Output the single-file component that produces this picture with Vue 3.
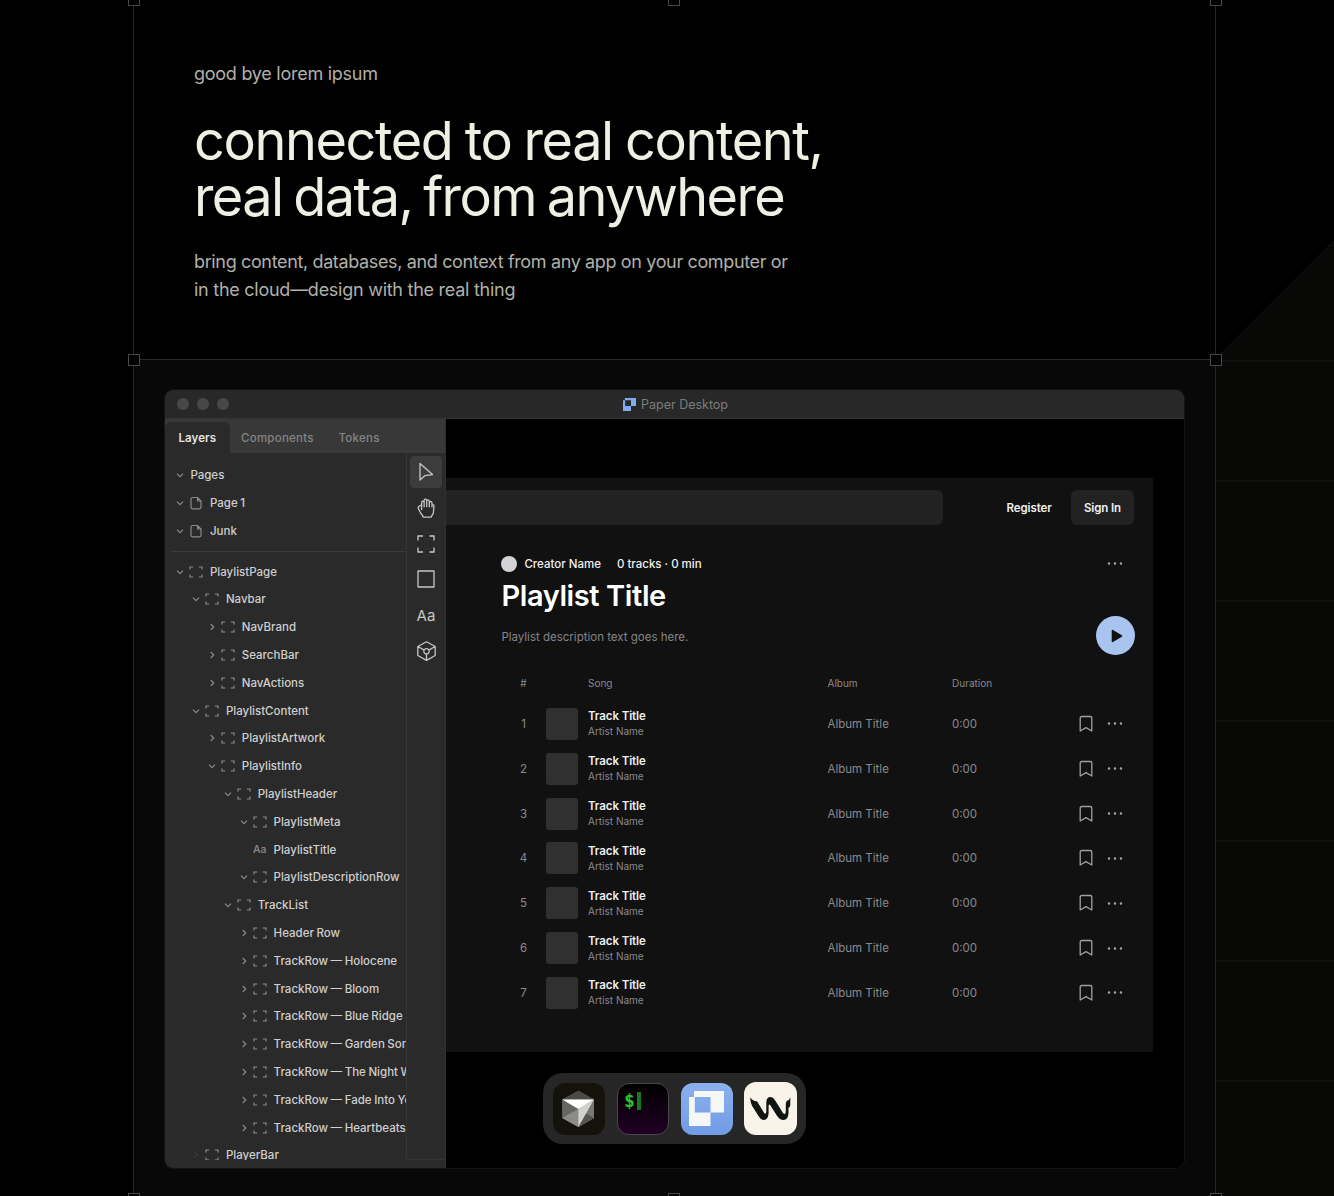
<template>
    <div class="page">
        <svg class="backdrop" width="119" height="1196" viewBox="0 0 119 1196">
            <path d="M0 360 119 241V1196H0Z" fill="#080807" />
            <path d="M0 360 119 241" stroke="#131313" fill="none" />
            <path
                v-for="y in guideLines"
                :key="y"
                :d="`M0 ${y}H119`"
                stroke="#131312"
                stroke-width="1.5"
            />
        </svg>

        <main class="frame">
            <section class="intro">
                <p class="eyebrow">good bye lorem ipsum</p>
                <h1>
                    <span>connected to real content,</span>
                    <span class="tight">real data, from anywhere</span>
                </h1>
                <p class="lead">
                    <span>bring content, databases, and context from any app on your computer or</span>
                    <span class="loose">in the cloud—design with the real thing</span>
                </p>
            </section>

            <section class="stage">
                <div class="window">
                    <header class="titlebar">
                        <div class="lights"><i></i><i></i><i></i></div>
                        <div class="window-title">
                            <svg width="13" height="13" viewBox="8 8 35 35">
                                <path :d="paperMark" fill="#82aaf0" fill-rule="evenodd" />
                            </svg>
                            <span>Paper Desktop</span>
                        </div>
                    </header>

                    <div class="window-body">
                        <aside class="sidebar">
                            <nav class="tabs">
                                <span class="tab active">Layers</span>
                                <span class="tab components">Components</span>
                                <span class="tab">Tokens</span>
                            </nav>
                            <div class="panels">
                                <div class="tree">
                                    <template v-for="(row, i) in layers" :key="i">
                                        <div v-if="i === 3" class="divider"></div>
                                        <div
                                            class="layer"
                                            :style="{ paddingLeft: `${10.4 + row.depth * 15.9}px` }"
                                        >
                                            <svg
                                                class="chevron"
                                                :class="{ dim: row.dim }"
                                                width="10"
                                                height="10"
                                                viewBox="0 0 10 10"
                                            >
                                                <path
                                                    v-if="row.state"
                                                    :d="
                                                        row.state === 'open'
                                                            ? 'M2 3.6 5 6.6 8 3.6'
                                                            : 'M3.7 2 6.7 5 3.7 8'
                                                    "
                                                />
                                            </svg>
                                            <span v-if="row.icon === 'text'" class="type-icon">Aa</span>
                                            <svg
                                                v-else-if="row.icon"
                                                class="layer-icon"
                                                width="14"
                                                height="14"
                                                viewBox="0 0 14 14"
                                            >
                                                <path
                                                    v-if="row.icon === 'page'"
                                                    d="M3.5 1.5H8.6L12 5V11.3Q12 12.8 10.5 12.8H3.5Q2 12.8 2 11.3V3Q2 1.5 3.5 1.5ZM8.6 1.5V5H12"
                                                />
                                                <path
                                                    v-else
                                                    d="M1 4.6V2H4.2M9.8 2H13V4.6M13 9.4V12H9.8M4.2 12H1V9.4"
                                                />
                                            </svg>
                                            <span class="layer-name">{{ row.name }}</span>
                                        </div>
                                    </template>
                                </div>

                                <div class="tools">
                                    <div
                                        v-for="tool in tools"
                                        :key="tool.name"
                                        class="tool"
                                        :class="{ selected: tool.name === 'move' }"
                                    >
                                        <span v-if="tool.name === 'text'">Aa</span>
                                        <svg v-else width="24" height="24" viewBox="0 0 24 24">
                                            <path :d="tool.d" />
                                        </svg>
                                    </div>
                                </div>
                            </div>
                        </aside>

                        <div class="canvas">
                            <article class="app">
                                <div class="navbar">
                                    <div class="search"></div>
                                    <span class="register">Register</span>
                                    <span class="signin">Sign In</span>
                                </div>

                                <div class="playlist">
                                    <div class="info">
                                        <div class="meta">
                                            <i class="avatar"></i>
                                            <span>Creator Name</span>
                                            <span class="count">0 tracks · 0 min</span>
                                        </div>
                                        <h2>Playlist Title</h2>
                                        <p>Playlist description text goes here.</p>
                                    </div>
                                    <div class="actions">
                                        <svg class="dots" width="16" height="17" viewBox="0 0 16 17">
                                            <path :d="dots" />
                                        </svg>
                                        <div class="play">
                                            <svg width="12" height="14" viewBox="0 0 12 14">
                                                <path
                                                    d="M1.5 1.6 10.4 7 1.5 12.4Z"
                                                    fill="#111"
                                                    stroke="#111"
                                                    stroke-width="1.6"
                                                    stroke-linejoin="round"
                                                />
                                            </svg>
                                        </div>
                                    </div>
                                </div>

                                <div class="track head">
                                    <span class="num">#</span>
                                    <span></span>
                                    <span>Song</span>
                                    <span>Album</span>
                                    <span>Duration</span>
                                </div>
                                <div v-for="n in 7" :key="n" class="track">
                                    <span class="num">{{ n }}</span>
                                    <i class="cover"></i>
                                    <div class="song">
                                        <strong>Track Title</strong>
                                        <small>Artist Name</small>
                                    </div>
                                    <span>Album Title</span>
                                    <span class="time">0:00</span>
                                    <svg width="14" height="18" viewBox="0 0 14 18">
                                        <path
                                            d="M1.2 3Q1.2 1.5 2.7 1.5H11.3Q12.8 1.5 12.8 3V16L7 12.6 1.2 16Z"
                                            fill="none"
                                            stroke="#a09fa4"
                                            stroke-width="1.3"
                                            stroke-linejoin="round"
                                        />
                                    </svg>
                                    <svg class="dots" width="16" height="17" viewBox="0 0 16 17">
                                        <path :d="dots" />
                                    </svg>
                                </div>
                            </article>
                        </div>
                    </div>

                    <div class="dock">
                        <div class="dock-icon cursor">
                            <svg width="51" height="51" viewBox="0 0 51 51">
                                <path d="M25.3 7.7 41 16.6V35L25.3 44 9.3 35V16.6Z" fill="#70706e" />
                                <path d="M25.3 7.7 41 16.6H9.3Z" fill="#4b4a47" />
                                <path d="M9.3 16.6 25.3 26 9.3 35Z" fill="#666664" />
                                <path d="M9.3 35 25.3 26V44Z" fill="#8b8b89" />
                                <path d="M41 16.6V35L25.3 44Z" fill="#777774" />
                                <path d="M25.3 44 41 35 33 30.3Z" fill="#555552" />
                                <path d="M41 16.6 25.3 44V26Z" fill="#d2d2d1" />
                                <path d="M9.3 16.6H41L25.3 26Z" fill="#fff" />
                            </svg>
                        </div>
                        <div class="dock-icon terminal"><b>$</b><i></i></div>
                        <div class="dock-icon paper">
                            <svg width="51" height="51" viewBox="0 0 51 51">
                                <path :d="paperMark" fill="#f5f6f6" fill-rule="evenodd" />
                            </svg>
                        </div>
                        <div class="dock-icon wave">
                            <svg width="53" height="53" viewBox="0 0 53 53">
                                <path
                                    d="M6.3 15.2Q8 18.8 13 19.3L20.2 31Q21.8 33.2 22.3 29.5V20.5Q22.4 15 26.5 15Q29 15 31.2 18.4L39 31Q41.6 34 41.8 28.5V22Q41.8 19.3 43.5 18.6Q45.5 18 46.3 15.2V22.5Q46.2 25.2 44.5 25.8V31Q44.2 38 39.6 38Q35.8 38 32.8 33.5L26.5 23.5Q24.9 21.5 24.6 24V31Q24.2 38 19.8 38Q16.9 38 14.2 33.5L8 23.8Q6.2 21 6.3 15.2Z"
                                    fill="#11150f"
                                />
                            </svg>
                        </div>
                    </div>
                </div>
            </section>

            <i v-for="pos in handles" :key="pos" class="handle" :class="pos"></i>
        </main>
    </div>
</template>

<script setup>
const guideLines = [361, 481, 601, 721, 841, 961, 1081];

const handles = [
    "top left",
    "top center",
    "top right",
    "mid left",
    "mid right",
    "bottom left",
    "bottom center",
    "bottom right",
];

const paperMark = "M13 8H43V29.5H29.5V43H8V14H13ZM13.8 14V29.5H29.5V14Z";
const dots = "M2 8.5h.01M8 8.5h.01M14 8.5h.01";

const layer = (name, depth, state = "closed", icon = "frame") => ({ name, depth, state, icon });

const layers = [
    layer("Pages", 0, "open", ""),
    layer("Page 1", 0, "open", "page"),
    layer("Junk", 0, "open", "page"),
    layer("PlaylistPage", 0, "open"),
    layer("Navbar", 1, "open"),
    layer("NavBrand", 2),
    layer("SearchBar", 2),
    layer("NavActions", 2),
    layer("PlaylistContent", 1, "open"),
    layer("PlaylistArtwork", 2),
    layer("PlaylistInfo", 2, "open"),
    layer("PlaylistHeader", 3, "open"),
    layer("PlaylistMeta", 4, "open"),
    layer("PlaylistTitle", 4, "", "text"),
    layer("PlaylistDescriptionRow", 4, "open"),
    layer("TrackList", 3, "open"),
    layer("Header Row", 4),
    layer("TrackRow — Holocene", 4),
    layer("TrackRow — Bloom", 4),
    layer("TrackRow — Blue Ridge", 4),
    layer("TrackRow — Garden Song", 4),
    layer("TrackRow — The Night We Met", 4),
    layer("TrackRow — Fade Into You", 4),
    layer("TrackRow — Heartbeats", 4),
    { ...layer("PlayerBar", 1), dim: true },
];

const tools = [
    { name: "move", d: "M6 3.5V20L10.8 15.7 18.5 14.6Z" },
    {
        name: "hand",
        d: "M7.6 14V6.4Q7.6 5.1 8.8 5.1T10.1 6.4V11.2M10.1 6V4.3Q10.1 3.1 11.4 3.1T12.7 4.3V11M12.7 5Q12.9 3.8 14 3.8T15.3 5.2V11.2M15.3 6.6Q15.6 5.5 16.6 5.5T18 6.8V11.6M18 8.6Q19.9 8.2 20 10.2L19.4 16.3Q19 18.6 17.8 19.6Q17.6 21.2 16.4 21.2H10Q8.8 21.2 8.6 19.6Q7 18.2 6.2 16L4.3 12.6Q4 10.4 5.6 9.8L7.6 9.2",
    },
    { name: "frame", d: "M4 8.6V4H9M15.5 4H20V8.6M20 15.4V20H15.5M9 20H4V15.4" },
    { name: "rectangle", d: "M4 4H20V20H4Z" },
    { name: "text" },
    {
        name: "component",
        d: "M12.5 2.8 21.2 7.5V16.5L12.5 21.4 3.8 16.5V7.5ZM3.8 7.5 9.8 10.9M21.2 7.5 15.2 10.9M12.5 21V15M12.5 9.6A2.7 2.7 0 1 1 12.5 15A2.7 2.7 0 1 1 12.5 9.6",
    },
];
</script>

<style>
body {
    background: #000;
}
</style>

<style scoped>
* {
    box-sizing: border-box;
}

.page {
    position: relative;
    width: 1334px;
    height: 1196px;
    overflow: hidden;
    background: #000;
    font-family: Inter, "Liberation Sans", sans-serif;
}

.backdrop {
    position: absolute;
    left: 1215px;
    top: 0;
}

.frame {
    position: relative;
    width: 1083px;
    height: 1196px;
    margin-left: 133px;
    border: solid #252525;
    border-width: 0 1px;
}

.intro {
    height: 359px;
    padding: 60px 60px 0;
    color: #b1b0aa;
    background: #000;
}

.eyebrow,
.lead {
    margin: 0;
    font-size: 18px;
    line-height: 28px;
    letter-spacing: -0.36px;
    white-space: nowrap;
}

.eyebrow {
    letter-spacing: -0.26px;
}

h1 span,
.lead span {
    display: block;
}

.lead .loose {
    letter-spacing: -0.26px;
}

h1 {
    margin: 25px 0 23px;
    color: #f0efe4;
    font-size: 54px;
    line-height: 56px;
    font-weight: 400;
    letter-spacing: -1.4px;
    word-spacing: -1.6px;
    white-space: nowrap;
}

h1 .tight {
    letter-spacing: -1.6px;
    word-spacing: -2.8px;
}

.stage {
    height: 837px;
    padding: 30px 31px;
    border-top: 1px solid #2a2a2a;
    background: #080808;
}

.window {
    position: relative;
    width: 1019px;
    height: 778px;
    border-radius: 8px;
    background: #000;
    box-shadow: 0 0 0 1px #141414;
    overflow: hidden;
}

.titlebar {
    display: grid;
    grid-template-columns: 1fr auto 1fr;
    align-items: center;
    height: 29px;
    padding: 0 12px;
    border-bottom: 1px solid #343434;
    background: #282828;
}

.lights {
    display: flex;
    gap: 8px;
}

.lights i {
    width: 12px;
    height: 12px;
    border-radius: 50%;
    background: #484848;
}

.window-title {
    display: flex;
    align-items: center;
    gap: 5px;
    padding-left: 2px;
    color: #7c7c7c;
    font-size: 12.5px;
}

.window-body {
    display: flex;
    height: 749px;
}

.sidebar {
    display: flex;
    flex-direction: column;
    width: 281px;
    background: #2a2a2a;
    border-right: 1px solid #303030;
}

.tabs {
    display: flex;
    flex: none;
    align-items: flex-end;
    height: 34px;
    background: #383838;
    color: #858585;
    font-size: 11.5px;
    font-weight: 500;
    letter-spacing: 0.25px;
}

.tab {
    height: 31px;
    line-height: 32px;
}

.tab.active {
    width: 65px;
    padding-left: 13.4px;
    border-radius: 6px 6px 0 0;
    background: #2a2a2a;
    color: #e4e4e4;
    font-weight: 600;
    letter-spacing: 0.1px;
}

.tab.components {
    width: 97.5px;
    margin-left: 11px;
}

.panels {
    display: flex;
    height: 707px;
}

.tree {
    width: 241px;
    padding-top: 8.4px;
    overflow: hidden;
}

.divider {
    height: 1px;
    margin: 6px 0 6px 6px;
    background: #3a3a3a;
}

.layer {
    display: flex;
    align-items: center;
    height: 27.8px;
    color: #cfcfcf;
    font-size: 11.5px;
    font-weight: 500;
    word-spacing: -0.5px;
    white-space: nowrap;
}

.layer svg {
    flex: none;
    fill: none;
    stroke: #8a8a8a;
    stroke-width: 1.2;
}

.chevron.dim {
    opacity: 0.15;
}

.layer-icon {
    margin-left: 4px;
}

.type-icon {
    width: 14px;
    margin-left: 4px;
    color: #8a8a8a;
    font-size: 10.5px;
}

.layer-name {
    margin-left: 6.6px;
}

.chevron + .layer-name {
    margin-left: 5px;
}

.tools {
    display: flex;
    flex-direction: column;
    align-items: center;
    gap: 3.8px;
    width: 39px;
    padding-top: 3px;
    border-left: 1px solid #353535;
    border-bottom: 1px solid #353535;
}

.tool {
    display: flex;
    align-items: center;
    justify-content: center;
    width: 32px;
    height: 32px;
    border-radius: 4px;
    color: #c6c6c6;
    font-size: 15px;
}

.tool.selected {
    background: #3c3c3c;
}

.tool svg {
    fill: none;
    stroke: #c6c6c6;
    stroke-width: 1.3;
    stroke-linejoin: round;
}

.canvas {
    width: 707px;
    padding-top: 59px;
}

.app {
    height: 574px;
    padding-top: 12px;
    background: #111;
    color: #f0f0f0;
}

.navbar {
    display: flex;
    align-items: center;
    height: 35px;
    font-size: 11.5px;
    font-weight: 600;
    letter-spacing: -0.1px;
}

.search {
    width: 497px;
    height: 35px;
    border-radius: 0 6px 6px 0;
    background: #222;
}

.register {
    width: 128px;
    padding-left: 63.5px;
}

.signin {
    width: 63px;
    height: 35px;
    border-radius: 6px;
    background: #222;
    line-height: 36px;
    text-align: center;
}

.playlist {
    display: flex;
    justify-content: space-between;
    height: 140px;
    padding: 30px 18.5px 0 55.4px;
}

.meta {
    display: flex;
    align-items: center;
    height: 17px;
    gap: 7px;
    font-size: 11.5px;
    font-weight: 500;
}

.avatar {
    width: 16px;
    height: 16px;
    border-radius: 50%;
    background: #d4d3d8;
}

.count {
    margin-left: 9px;
}

h2 {
    margin: 5px 0 0;
    color: #fff;
    font-size: 29px;
    line-height: 38px;
    font-weight: 600;
    letter-spacing: -0.4px;
}

.info p {
    margin: 14px 0 0;
    color: #85848a;
    font-size: 11.5px;
    line-height: 17px;
}

.actions {
    display: flex;
    flex-direction: column;
    align-items: center;
    gap: 44px;
}

.play {
    display: flex;
    align-items: center;
    justify-content: center;
    width: 39px;
    height: 39px;
    padding-left: 4px;
    border-radius: 50%;
    background: #a9c4ee;
}

.dots {
    fill: none;
    stroke: #a3a2a7;
    stroke-width: 2.5;
    stroke-linecap: round;
}

.track {
    display: grid;
    grid-template-columns: 36px 42px 239.5px 124.5px 127px 28px 16px;
    align-items: center;
    height: 44.83px;
    padding-left: 64px;
    color: #8a898f;
    font-size: 11.5px;
}

.track.head {
    height: 36.5px;
    font-size: 10px;
}

.num {
    width: 27px;
    text-align: center;
}

.cover {
    width: 32px;
    height: 32px;
    border-radius: 3px;
    background: #303030;
}

.song {
    display: flex;
    flex-direction: column;
}

.song strong {
    color: #eee;
    font-size: 11.5px;
    line-height: 15px;
    font-weight: 600;
    letter-spacing: -0.08px;
}

.song small {
    font-size: 10px;
    line-height: 14px;
}

.dock {
    position: absolute;
    left: 378px;
    top: 683px;
    display: flex;
    align-items: center;
    gap: 12px;
    width: 263px;
    height: 71px;
    padding-left: 10px;
    border-radius: 20px;
    background: #262626;
}

.dock-icon {
    flex: none;
    width: 52px;
    height: 52px;
    border-radius: 12px;
    overflow: hidden;
}

.cursor {
    background: #14120b;
}

.terminal {
    display: flex;
    gap: 2px;
    padding: 7px 0 0 6px;
    border: 1px solid #4a464c;
    background: linear-gradient(#000, #220026);
}

.terminal b {
    color: #28c32e;
    font-family: "DejaVu Sans Mono", monospace;
    font-size: 18px;
    line-height: 20px;
    font-weight: 700;
}

.terminal i {
    width: 4px;
    height: 18px;
    margin-top: 1px;
    background: #16781c;
}

.paper {
    background: linear-gradient(#8cb0ee, #709ce6);
}

.wave {
    width: 53px;
    height: 53px;
    margin-left: -1px;
    background: #faf3e9;
}

.handle {
    position: absolute;
    width: 12px;
    height: 12px;
    border: 1px solid #484848;
    background: #000;
}

.handle.top {
    top: -6px;
}

.handle.mid {
    top: 354px;
}

.handle.bottom {
    bottom: -9px;
}

.handle.left {
    left: -6px;
}

.handle.center {
    left: 534px;
}

.handle.right {
    right: -7px;
}
</style>
